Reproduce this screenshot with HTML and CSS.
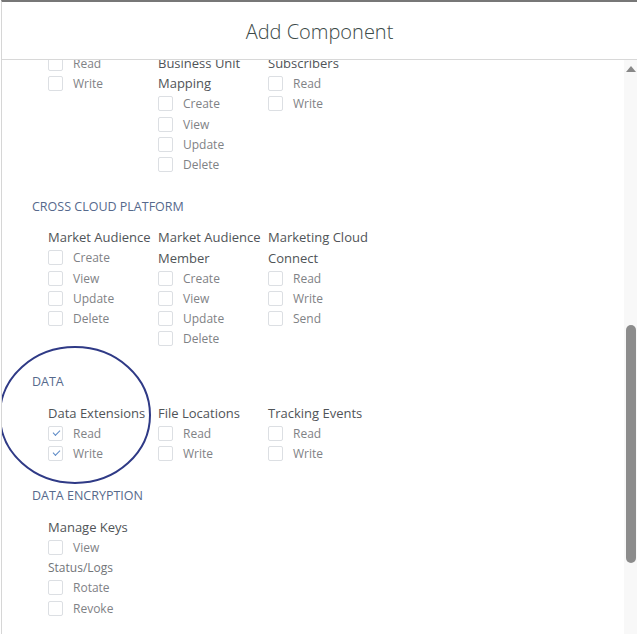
FILE: index.html
```html
<!DOCTYPE html>
<html lang="en">
  <head>
    <meta charset="UTF-8" />
    <meta name="viewport" content="width=device-width, initial-scale=1.0" />
    <title>Add Component</title>
    <link rel="stylesheet" href="styles.css">
  </head>
  <body>
    <div class="modal">
      <div class="modal-header">
        <h2>Add Component</h2>
      </div>
      <div class="modal-body">
        <div class="content">
          <div class="section first">
            <div class="group">
              <div class="col">
                <label class="opt"><span class="box"></span>Read</label>
                <label class="opt"><span class="box"></span>Write</label>
              </div>
              <div class="col">
                <div class="col-title">Business Unit Mapping</div>
                <label class="opt"><span class="box"></span>Create</label>
                <label class="opt"><span class="box"></span>View</label>
                <label class="opt"><span class="box"></span>Update</label>
                <label class="opt"><span class="box"></span>Delete</label>
              </div>
              <div class="col">
                <div class="col-title">Subscribers</div>
                <label class="opt"><span class="box"></span>Read</label>
                <label class="opt"><span class="box"></span>Write</label>
              </div>
            </div>
          </div>

          <div class="section">
            <div class="section-title">CROSS CLOUD PLATFORM</div>
            <div class="group">
              <div class="col">
                <div class="col-title">Market Audience</div>
                <label class="opt"><span class="box"></span>Create</label>
                <label class="opt"><span class="box"></span>View</label>
                <label class="opt"><span class="box"></span>Update</label>
                <label class="opt"><span class="box"></span>Delete</label>
              </div>
              <div class="col">
                <div class="col-title">Market Audience Member</div>
                <label class="opt"><span class="box"></span>Create</label>
                <label class="opt"><span class="box"></span>View</label>
                <label class="opt"><span class="box"></span>Update</label>
                <label class="opt"><span class="box"></span>Delete</label>
              </div>
              <div class="col">
                <div class="col-title">Marketing Cloud Connect</div>
                <label class="opt"><span class="box"></span>Read</label>
                <label class="opt"><span class="box"></span>Write</label>
                <label class="opt"><span class="box"></span>Send</label>
              </div>
            </div>
          </div>

          <div class="section">
            <div class="section-title">DATA</div>
            <div class="group">
              <div class="col">
                <div class="col-title">Data Extensions</div>
                <label class="opt"><span class="box checked"></span>Read</label>
                <label class="opt"><span class="box checked"></span>Write</label>
              </div>
              <div class="col">
                <div class="col-title">File Locations</div>
                <label class="opt"><span class="box"></span>Read</label>
                <label class="opt"><span class="box"></span>Write</label>
              </div>
              <div class="col">
                <div class="col-title">Tracking Events</div>
                <label class="opt"><span class="box"></span>Read</label>
                <label class="opt"><span class="box"></span>Write</label>
              </div>
            </div>
          </div>

          <div class="section">
            <div class="section-title">DATA ENCRYPTION</div>
            <div class="group">
              <div class="col wide">
                <div class="col-title">Manage Keys</div>
                <label class="opt"><span class="box"></span>View</label>
                <div class="col-sub">Status/Logs</div>
                <label class="opt"><span class="box"></span>Rotate</label>
                <label class="opt"><span class="box"></span>Revoke</label>
              </div>
            </div>
          </div>

          <svg class="highlight" width="156" height="142" viewBox="0 0 156 142">
            <ellipse cx="77" cy="70" rx="75" ry="68" fill="none" stroke="#2f3a86" stroke-width="2" />
          </svg>
        </div>
        <div class="scrollbar">
          <span class="arrow"></span>
          <span class="thumb"></span>
        </div>
      </div>
    </div>
  </body>
</html>
```

FILE: styles.css
```css
html,
body {
  margin: 0;
  padding: 0;
  background: #fff;
}
body {
  font-family: "Open Sans", "Liberation Sans", sans-serif;
}
.modal {
  height: 634px;
  border-top: 2px solid #777;
  border-left: 1px solid #d6d6d6;
  margin-left: 1px;
  display: flex;
  flex-direction: column;
  box-sizing: border-box;
  overflow: hidden;
}
.modal-header {
  height: 57px;
  border-bottom: 1px solid #d8d8d8;
  display: flex;
  align-items: center;
  justify-content: center;
  flex: none;
}
.modal-header h2 {
  margin: 0;
  font-size: 20px;
  font-weight: 300;
  color: #3c4a48;
  padding-top: 1px;
}
.modal-body {
  flex: 1;
  display: flex;
  min-height: 0;
}
.content {
  flex: 1;
  position: relative;
  overflow: hidden;
  padding-left: 30px;
}
.section {
  padding-bottom: 23px;
}
.section.first {
  margin-top: -7px;
  padding-bottom: 22px;
}
.section-title {
  font-size: 12.5px;
  line-height: 20px;
  color: #56698c;
  margin-bottom: 10.5px;
}
.group {
  display: flex;
  padding-left: 16px;
}
.col {
  width: 110px;
  display: flex;
  flex-direction: column;
}
.col.wide {
  width: 160px;
}
.col-title,
.col-sub {
  font-size: 13px;
  line-height: 20.3px;
  color: #505458;
}
.col-sub {
  font-size: 12px;
  color: #727579;
}
.opt {
  display: flex;
  align-items: center;
  height: 20.3px;
  font-size: 12px;
  color: #7f8286;
}
.box {
  width: 13px;
  height: 13px;
  border: 1px solid #dcdfe3;
  border-radius: 2px;
  margin-right: 10px;
  position: relative;
  flex: none;
}
.box.checked::after {
  content: "";
  position: absolute;
  left: 4px;
  top: 3px;
  width: 6px;
  height: 3px;
  border-left: 1.5px solid #5d8ac6;
  border-bottom: 1.5px solid #5d8ac6;
  transform: rotate(-45deg);
}
.highlight {
  position: absolute;
  left: -4px;
  top: 285px;
}
.scrollbar {
  width: 13px;
  background: #f8f8f8;
  position: relative;
  flex: none;
}
.arrow {
  position: absolute;
  left: 2px;
  top: 6px;
  width: 0;
  height: 0;
  border-left: 5px solid transparent;
  border-right: 5px solid transparent;
  border-bottom: 6px solid #888;
}
.thumb {
  position: absolute;
  left: 2px;
  top: 265px;
  width: 10px;
  height: 238px;
  border-radius: 5px;
  background: #8c8c8c;
}
```
